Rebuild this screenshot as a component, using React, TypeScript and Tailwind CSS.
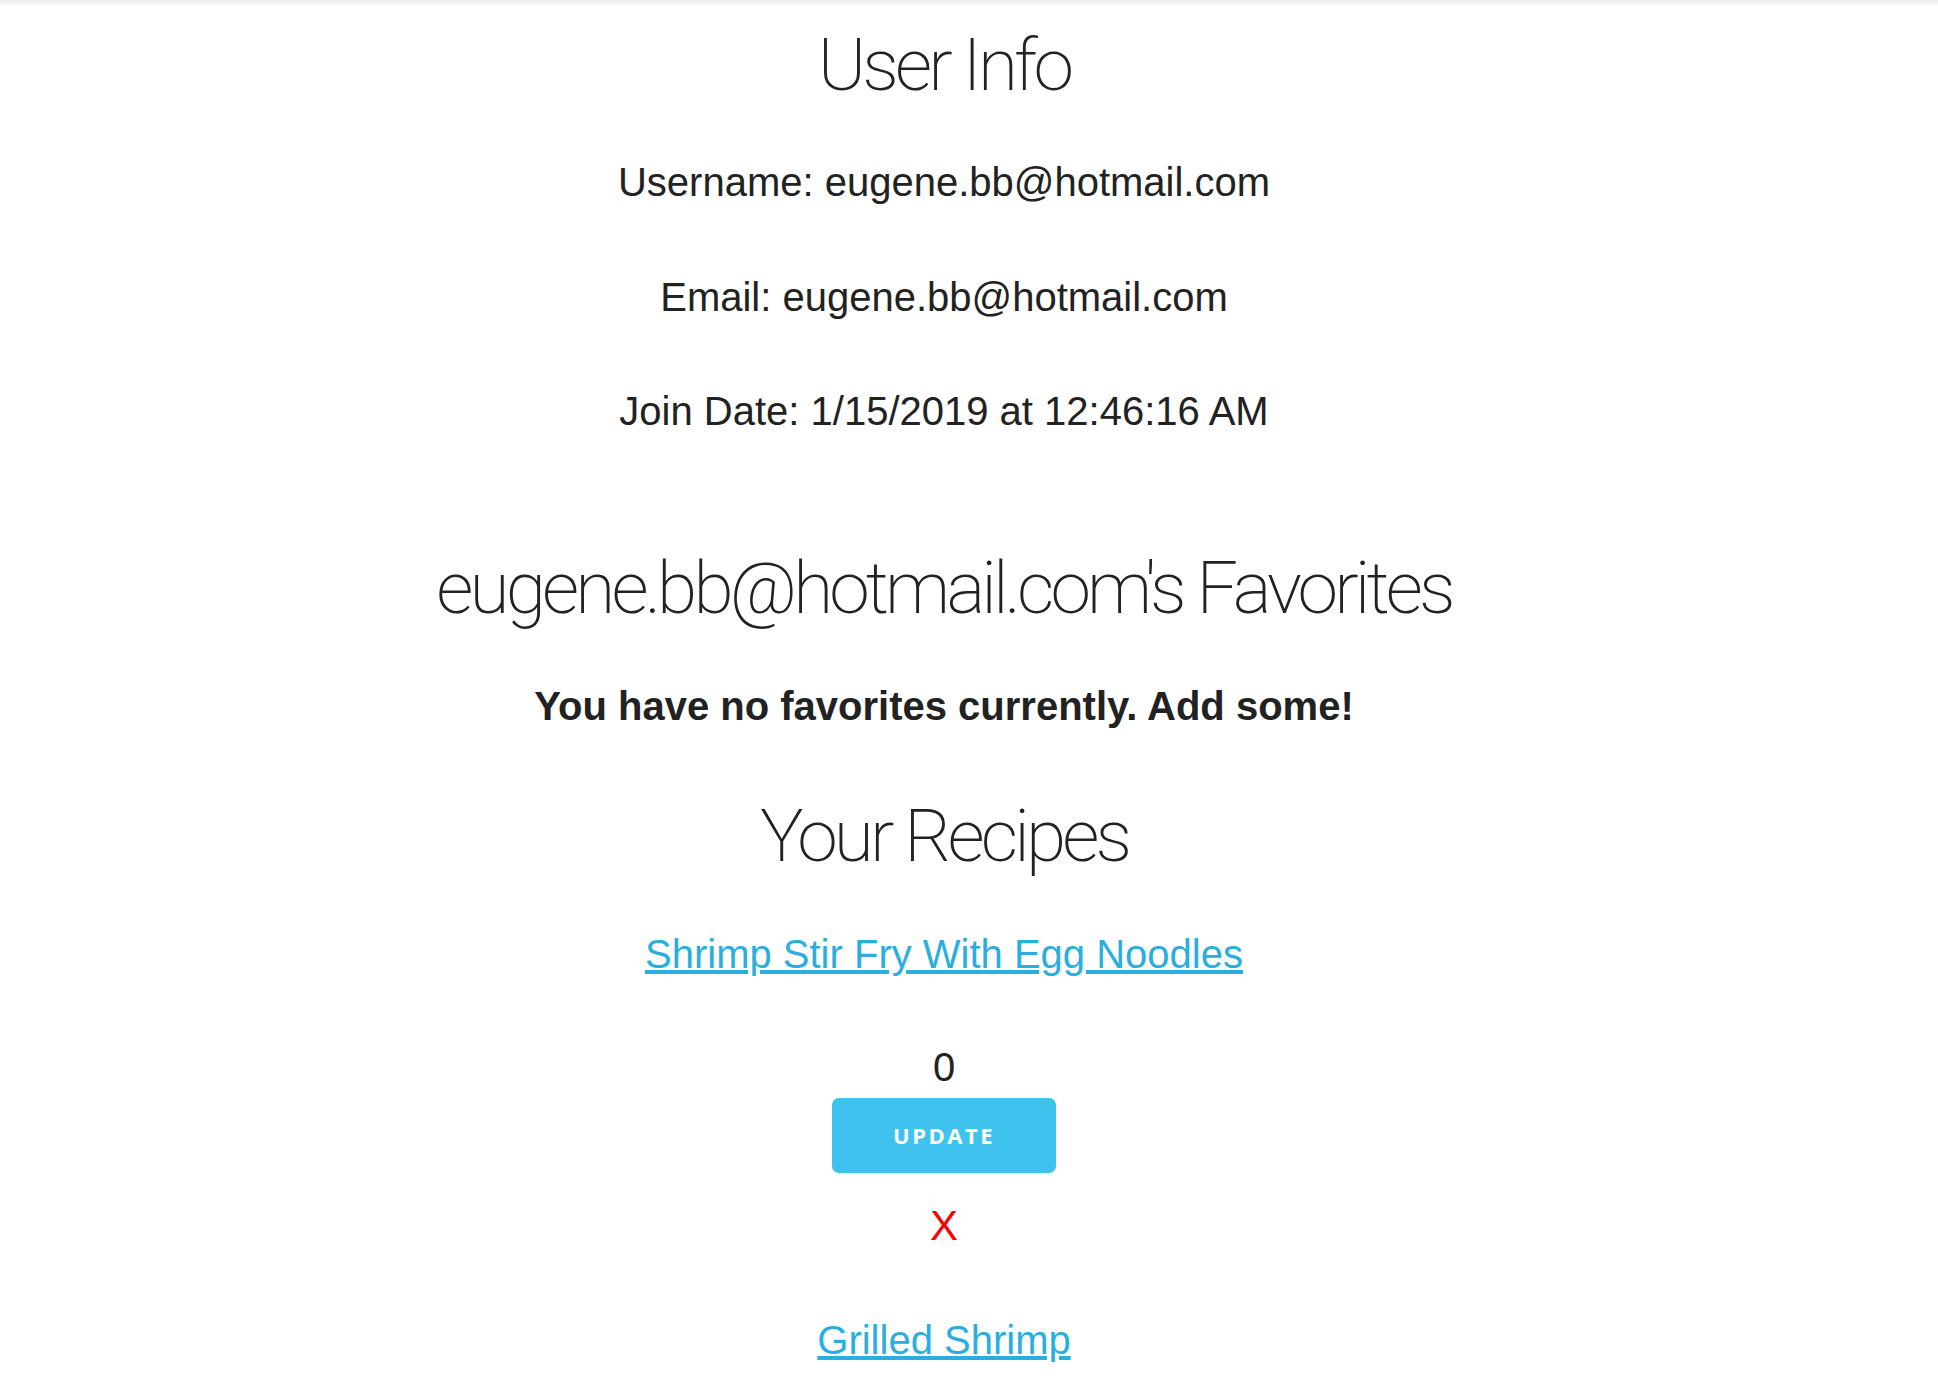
const heading = "font-['Roboto',sans-serif] font-[160] text-[73px] leading-[88px] tracking-[-3.9px] text-[#222]";
const sans = "font-['Liberation_Sans',Arial,sans-serif] text-[40px] text-[#222]";
const link = "font-['Liberation_Sans',Arial,sans-serif] text-[40px] leading-[64px] text-[#2aaee0] underline";

export default function App() {
  const user = 'eugene.bb@hotmail.com';

  return (
    <div className="min-h-screen bg-white">
      <div className="h-[6px] bg-gradient-to-b from-[#ececec] to-white" />
      <div className="w-[1888px] flex flex-col items-center text-center">
        <h1 className={`${heading} mt-[15px]`}>User Info</h1>
        <p className={`${sans} leading-[64px] mt-[41px]`}>Username: {user}</p>
        <p className={`${sans} leading-[64px] mt-[51px]`}>Email: {user}</p>
        <p className={`${sans} leading-[64px] mt-[50px]`}>Join Date: 1/15/2019 at 12:46:16 AM</p>

        <h2 className={`${heading} mt-[101px]`}>{user}'s Favorites</h2>
        <p className={`${sans} leading-[64px] font-bold mt-[42px]`}>You have no favorites currently. Add some!</p>

        <h2 className={`${heading} mt-[54px]`}>Your Recipes</h2>
        <a href="#" className={`${link} mt-[42px]`}>Shrimp Stir Fry With Egg Noodles</a>
        <div className={`${sans} leading-[48px] mt-[57px]`}>0</div>
        <button className="mt-[7px] w-[224px] h-[75px] rounded-[7px] bg-[#3fc3ee] text-white font-['Open_Sans',sans-serif] font-bold text-[22px] tracking-[2.5px] uppercase">
          Update
        </button>
        <div className="mt-[29px] font-['Liberation_Sans',Arial,sans-serif] text-[42px] leading-[48px] text-[#ff0000]">X</div>
        <a href="#" className={`${link} mt-[58px]`}>Grilled Shrimp</a>
      </div>
    </div>
  );
}
